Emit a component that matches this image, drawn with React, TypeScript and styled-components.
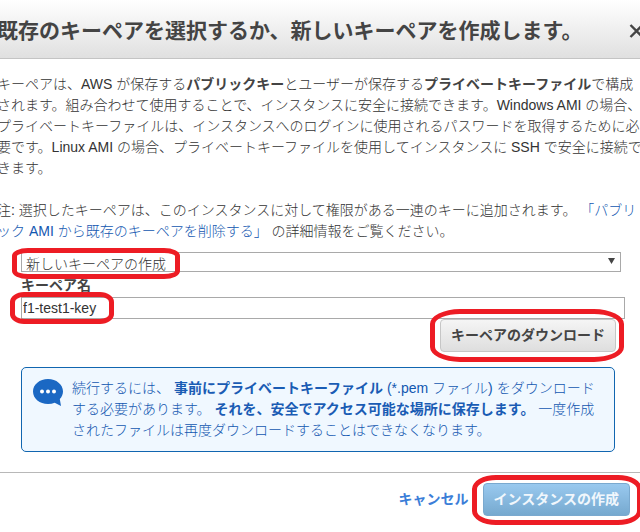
import React from "react";
import styled, { createGlobalStyle } from "styled-components";

const GlobalStyle = createGlobalStyle`
  *, *::before, *::after { box-sizing: border-box; }
  body {
    margin: 0;
    background: #fff;
    color: #333;
    font-family: "Liberation Sans", "Noto Sans CJK JP", sans-serif;
    font-size: 14px;
    font-weight: 300;
    line-height: 21px;
    overflow: hidden;
    text-spacing-trim: space-all;
  }
  button, input, select { font: inherit; color: inherit; margin: 0; }
`;

const Dialog = styled.main`
  margin: 0 -4px 0 -3px;
  overflow: hidden;
`;

const Header = styled.header`
  display: flex;
  align-items: center;
  justify-content: space-between;
  height: 59px;
  padding-top: 4px;
  background: linear-gradient(#fff, #e0e0e0);
  border-bottom: 1px solid #c4c4c4;
`;

const Title = styled.h1`
  margin: 0;
  color: #444;
  font-size: 21px;
  font-weight: 700;
  line-height: 30px;
  white-space: nowrap;
`;

const CloseButton = styled.button`
  display: flex;
  padding: 0;
  border: 0;
  background: none;
  color: #444;
`;

const Content = styled.div`
  padding-top: 15px;
`;

const Paragraph = styled.p`
  margin: 0 0 21px;
`;

const Term = styled.strong`
  color: #444;
  font-weight: 700;
`;

const Link = styled.a`
  color: #1257b0;
  text-decoration: none;
`;

const Form = styled.form`
  display: flex;
  flex-direction: column;
  margin: -11px 19px 0 24px;
`;

const Field = styled.div`
  position: relative;
`;

const SelectField = styled(Field)`
  margin-right: 4px;
`;

const Select = styled.select`
  display: block;
  appearance: none;
  width: 100%;
  height: 20px;
  padding: 2px 20px 0 4px;
  border: 1px solid #a9a9a9;
  border-radius: 0;
  background: #fff;
  line-height: 18px;
`;

const Arrow = styled.svg`
  position: absolute;
  top: 6px;
  right: 6px;
  pointer-events: none;
`;

const Label = styled.label`
  height: 22px;
  margin-top: 3px;
  color: #444;
  font-weight: 700;
`;

const Input = styled.input`
  display: block;
  width: 100%;
  height: 22px;
  padding: 0 1px;
  border: 1px solid #a9a9a9;
  background: #fff;
`;

const Mark = styled.span<{ $width?: number; $shape: string; $inset: string }>`
  position: absolute;
  inset: ${(p) => p.$inset};
  width: ${(p) => (p.$width ? `${p.$width}px` : "auto")};
  border: 5px solid #ed1c24;
  border-radius: ${(p) => p.$shape};
  pointer-events: none;
`;

const ButtonSlot = styled.div<{ $end?: number }>`
  position: relative;
  align-self: flex-end;
  margin-right: ${(p) => p.$end ?? 0}px;
`;

const Button = styled.button<{ $primary?: boolean }>`
  display: block;
  height: 33px;
  padding: 0 10px;
  border: 1px solid ${(p) => (p.$primary ? "#7aa9cf" : "#c6c6c6")};
  border-radius: 4px;
  background: ${(p) =>
    p.$primary ? "linear-gradient(#99c9ef, #76a9cf)" : "linear-gradient(#f5f5f5, #dedede)"};
  color: ${(p) => (p.$primary ? "#f1f7fc" : "#444")};
  font-weight: 700;
  line-height: 21px;
  white-space: nowrap;
`;

const Notice = styled.aside`
  display: flex;
  gap: 9px;
  margin: 15px 29px 0 24px;
  padding: 10px 11px;
  border: 1px solid #1166b0;
  border-radius: 5px;
  background: #f0f8ff;
  color: #1257b0;
`;

const NoticeIcon = styled.svg`
  flex: none;
  margin-top: 1px;
`;

const NoticeText = styled.p`
  margin: 0;
`;

const NoticeStrong = styled.strong`
  color: #1a5cb4;
  font-weight: 700;
`;

const Footer = styled.footer`
  display: flex;
  align-items: center;
  justify-content: flex-end;
  gap: 14px;
  margin-top: 20px;
  padding: 10px 14px 16px;
  border-top: 1px solid #b8b8b8;
`;

const CancelLink = styled.a`
  color: #3b7ed8;
  font-weight: 700;
  text-decoration: none;
`;

export default function App() {
  return (
    <>
      <GlobalStyle />
      <Dialog>
        <Header>
          <Title>既存のキーペアを選択するか、新しいキーペアを作成します。</Title>
          <CloseButton type="button" aria-label="閉じる">
            <svg width="15" height="15" viewBox="0 0 15 15">
              <path d="M1.5 1 13.500 13M13.500 1 1.500 13" stroke="currentColor" strokeWidth="2.4" />
            </svg>
          </CloseButton>
        </Header>
        <Content>
          <Paragraph>
            キーペアは、AWS が保存する<Term>パブリックキー</Term>とユーザーが保存する
            <Term>プライベートキーファイル</Term>
            で構成されます。組み合わせて使用することで、インスタンスに安全に接続できます。Windows AMI
            の場合、プライベートキーファイルは、インスタンスへのログインに使用されるパスワードを取得するために必要です。Linux
            AMI の場合、プライベートキーファイルを使用してインスタンスに SSH で安全に接続できます。
          </Paragraph>
          <Paragraph>
            注: 選択したキーペアは、このインスタンスに対して権限がある一連のキーに追加されます。{" "}
            <Link href="#remove">「パブリック AMI から既存のキーペアを削除する」</Link>{" "}
            の詳細情報をご覧ください。
          </Paragraph>
          <Form onSubmit={(e) => e.preventDefault()}>
            <SelectField>
              <Select aria-label="キーペアの選択" defaultValue="new">
                <option value="new">新しいキーペアの作成</option>
              </Select>
              <Arrow width="7" height="6" viewBox="0 0 7 6">
                <path d="M0 0H7L3.5 6Z" fill="#444" />
              </Arrow>
              <Mark $width={168} $inset="-4px auto -7px -9px" $shape="16px / 8px" />
            </SelectField>
            <Label htmlFor="key-name">キーペア名</Label>
            <Field>
              <Input id="key-name" type="text" defaultValue="f1-test1-key" />
              <Mark $width={104} $inset="-5px auto -5px -11px" $shape="14px / 10px" />
            </Field>
            <ButtonSlot $end={9}>
              <Button type="button">キーペアのダウンロード</Button>
              <Mark $inset="-10px -8px -10px -10px" $shape="30px / 15px" />
            </ButtonSlot>
          </Form>
          <Notice>
            <NoticeIcon width="30" height="27" viewBox="0 0 30 27">
              <path
                d="M15 0C6.700 0 0 5.500 0 12.500S6.700 25 15 25C17.500 25 19.700 24.600 21.700 23.800L28 27 26.800 20.100C28.800 18 30 15.400 30 12.500 30 5.500 23.300 0 15 0Z"
                fill="#1b68c3"
              />
              <circle cx="9" cy="12.500" r="2" fill="#fff" />
              <circle cx="15" cy="12.500" r="2" fill="#fff" />
              <circle cx="21" cy="12.500" r="2" fill="#fff" />
            </NoticeIcon>
            <NoticeText>
              続行するには、 <NoticeStrong>事前にプライベートキーファイル</NoticeStrong> (*.pem
              ファイル) をダウンロードする必要があります。{" "}
              <NoticeStrong>それを、安全でアクセス可能な場所に保存します。</NoticeStrong>{" "}
              一度作成されたファイルは再度ダウンロードすることはできなくなります。
            </NoticeText>
          </Notice>
        </Content>
        <Footer>
          <CancelLink href="#cancel">キャンセル</CancelLink>
          <ButtonSlot>
            <Button type="button" $primary>
              インスタンスの作成
            </Button>
            <Mark $inset="-8px -12px -9px -11px" $shape="24px / 14px" />
          </ButtonSlot>
        </Footer>
      </Dialog>
    </>
  );
}
